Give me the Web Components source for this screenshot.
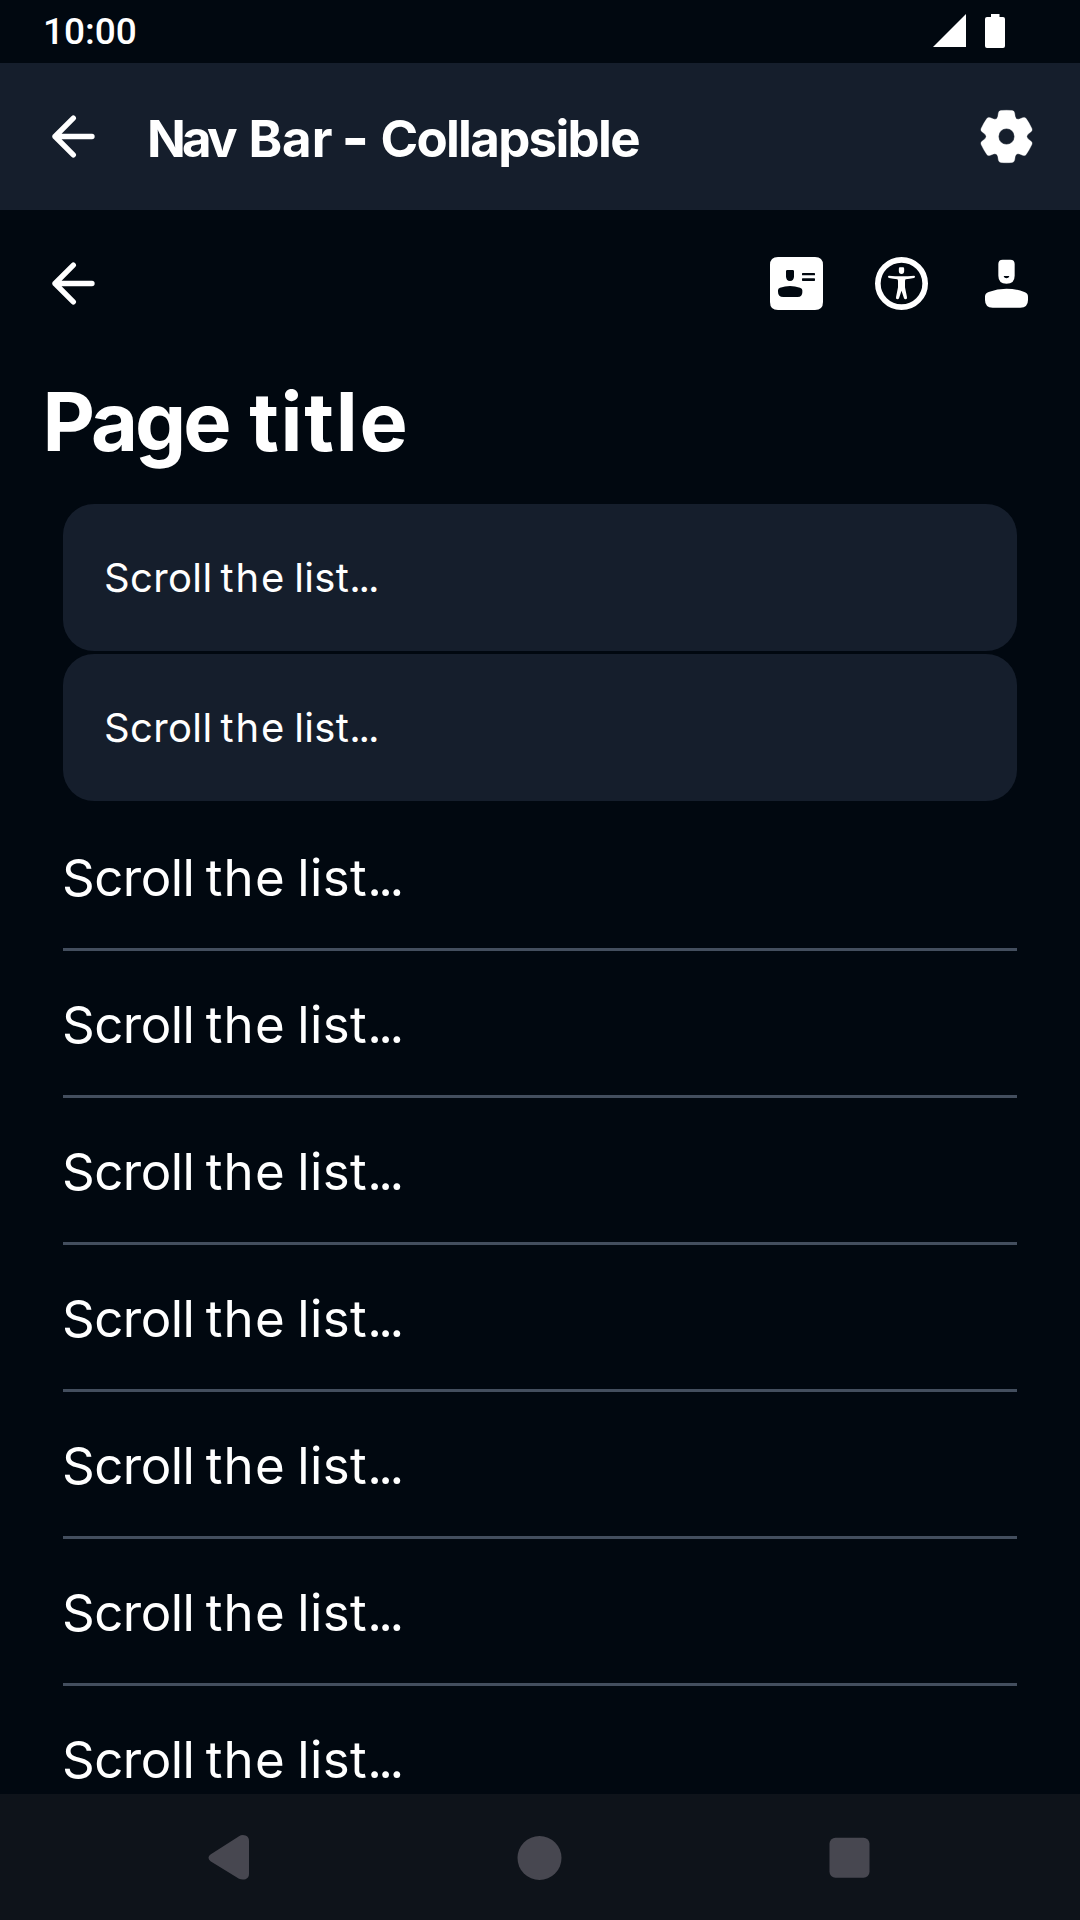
<!DOCTYPE html>
<html lang="en">
<head>
<meta charset="utf-8">
<title>Nav Bar - Collapsible</title>
<style>
  html, body { margin: 0; padding: 0; background: #010810; }
  body { width: 1080px; height: 1920px; overflow: hidden; }
</style>
</head>
<body>
<phone-screen>
  <status-bar slot="status">10:00</status-bar>
  <app-header slot="header"></app-header>
  <collapsible-toolbar slot="toolbar"></collapsible-toolbar>
  <list-card></list-card>
  <list-card></list-card>
  <list-row></list-row>
  <list-row></list-row>
  <list-row></list-row>
  <list-row></list-row>
  <list-row></list-row>
  <list-row></list-row>
  <list-row></list-row>
  <system-nav slot="nav"></system-nav>
</phone-screen>
<script>
const define = (name, html) => {
  const tpl = document.createElement('template');
  tpl.innerHTML = html;
  customElements.define(name, class extends HTMLElement {
    constructor() {
      super();
      this.attachShadow({ mode: 'open' }).append(tpl.content.cloneNode(true));
    }
  });
};

/* One gear tooth is repeated every 60 degrees around the centre. */
const gearPath = () => {
  const tooth = [[-24.5, -70], [-24, -77], [-17, -78], [0, -79.5], [17, -78], [24, -77], [24.5, -70], [26, -60], [28.5, -49.4]];
  let d = '';
  for (let i = 0; i < 6; i++) {
    const a = i * Math.PI / 3, c = Math.cos(a), s = Math.sin(a);
    const p = tooth.map(([x, y]) => (x * c - y * s + 79.5).toFixed(2) + ' ' + (x * s + y * c + 79.5).toFixed(2));
    const n = a + Math.PI / 3;
    const end = (-26 * Math.cos(n) + 60 * Math.sin(n) + 79.5).toFixed(2) + ' ' + (-26 * Math.sin(n) - 60 * Math.cos(n) + 79.5).toFixed(2);
    d += (i ? 'L' : 'M') + p[0] + 'Q' + p[1] + ' ' + p[2] + 'Q' + p[3] + ' ' + p[4] + 'Q' + p[5] + ' ' + p[6] + 'L' + p[7] + 'Q' + p[8] + ' ' + end;
  }
  return d + 'ZM55.5 79.5a24 24 0 1 0 48 0a24 24 0 1 0 -48 0Z';
};

const icons = {
  back: '<g fill="none" stroke="#fff" stroke-width="16" stroke-linecap="round" stroke-linejoin="round"><path d="M88 24.500L33 79.500L88 134.500M33 79.500H144"/></g>',
  gear: `<path fill="#fff" fill-rule="evenodd" stroke="#fff" stroke-width="1" d="${gearPath()}"/>`,
  card: '<path fill="#fff" fill-rule="evenodd" d="M24 0H135Q159 0 159 24V135Q159 159 135 159H24Q0 159 0 135V24Q0 0 24 0ZM52 39Q48 39 48 43V58Q48 72 60 72Q72 72 72 58V43Q72 39 68 39ZM24 100Q24 94 30 92Q60 82 90 92Q97 94 97 100V106Q97 120 83 120H40Q24 120 24 104ZM98 48H133Q135 48 135 50V53Q135 55 133 55H98Q96 55 96 53V50Q96 48 98 48ZM98 64H133Q135 64 135 66V70Q135 72 133 72H98Q96 72 96 70V66Q96 64 98 64Z"/>',
  access: '<circle cx="79.500" cy="79.500" r="71" fill="none" stroke="#fff" stroke-width="17"/><path fill="#fff" d="M75 31H84Q87.500 31 87.500 35V42Q87.500 51 79.500 51Q71.500 51 71.500 42V35Q71.500 31 75 31ZM42 56Q60 58 79.500 58Q99 58 117 56Q120 56 120 59.500Q120 62 117 63Q104 66 92 67Q90 68 90 73V91L96 121Q97 127 92 127Q88 127 87 124L79.500 101L72 124Q71 127 67 127Q62 127 63 121L69 91V73Q69 68 67 67Q55 66 42 63Q39 62 39 59.500Q39 56 42 56Z"/>',
  person: '<path fill="#fff" fill-rule="evenodd" d="M68 8H91Q104 8 104 21V56Q104 80 79.500 80Q55 80 55 56V21Q55 8 68 8ZM72 57Q71 57 71 58Q73 64 79.500 64Q86 64 88 58Q88 57 87 57ZM15 119Q15 109 26 105Q52 95 79.500 95Q107 95 133 105Q144 109 144 119V129Q144 152 121 152H38Q15 152 15 129Z"/>'
};

class UiIcon extends HTMLElement {
  constructor() { super(); this.attachShadow({ mode: 'open' }); }
  connectedCallback() {
    this.shadowRoot.innerHTML = `<style>:host{display:block;width:53px;height:53px;flex:none}svg{display:block;width:100%;height:100%;overflow:visible}</style>
      <svg viewBox="0 0 159 159" aria-hidden="true">${icons[this.getAttribute('name')]}</svg>`;
  }
}
customElements.define('ui-icon', UiIcon);

define('phone-screen', `<style>
  :host{display:flex;flex-direction:column;width:1080px;height:1920px;overflow:hidden;background:#010810;color:#fff;font-family:Inter,"Liberation Sans",sans-serif;white-space:nowrap}
  main{flex:1;min-height:0;overflow:hidden;display:flex;flex-direction:column;gap:3px;padding:0 63px}
  main ::slotted(list-row){margin-bottom:-3px}
</style>
<slot name="status"></slot><slot name="header"></slot><slot name="toolbar"></slot>
<main><slot></slot></main><slot name="nav"></slot>`);

define('status-bar', `<style>
  :host{display:flex;justify-content:space-between;height:63px;flex:none;padding:0 75px 0 43px;font:500 37px/63px Roboto,sans-serif}
  div{display:flex;gap:19px;padding-top:14px;height:34px}
  svg{display:block;height:34px}
</style>
<span><slot></slot></span>
<div>
  <svg width="33" viewBox="0 0 33 34"><path fill="#fff" d="M0 33L33 0V33Z"/></svg>
  <svg width="20" viewBox="0 0 20 34"><path fill="#fff" d="M6 0H14.500V3H18Q20 3 20 5V32Q20 34 18 34H2Q0 34 0 32V5Q0 3 2 3H6Z"/></svg>
</div>`);

define('app-header', `<style>
  :host{display:flex;align-items:center;height:147px;flex:none;box-sizing:border-box;padding:0 47px 0 44px;background:#151e2c}
  h1{flex:1;margin:0;padding:4px 0 0 50px;font-weight:700;font-size:51px;line-height:143px}
  .nav{letter-spacing:-3.800px}
  .bar{margin-left:2.500px}
  .dash{font-size:59px;line-height:1;margin-left:-3.200px;vertical-align:-2px}
  .name{letter-spacing:-1.700px;margin-left:-.7px}
</style>
<ui-icon name="back"></ui-icon>
<h1><span class="nav">Nav</span> <span class="bar">Bar</span> <span class="dash">-</span> <span class="name">Collapsible</span></h1>
<ui-icon name="gear"></ui-icon>`);

define('collapsible-toolbar', `<style>
  :host{display:block;height:294px;flex:none}
  nav{display:flex;align-items:center;gap:52px;height:147px;padding:0 47px 0 44px}
  nav ui-icon:first-child{margin-right:auto}
  h2{margin:0;height:147px;padding-left:42.500px;font-weight:700;font-size:81px;line-height:131px}
  .a{letter-spacing:-3px}
  .b{letter-spacing:1.700px;margin-left:1.600px}
</style>
<nav><ui-icon name="back"></ui-icon><ui-icon name="card"></ui-icon><ui-icon name="access"></ui-icon><ui-icon name="person"></ui-icon></nav>
<h2><span class="a">Page</span> <span class="b">title</span></h2>`);

const words = '<span class="w1">Scroll</span> <span class="w2">the</span> <span class="w3">list</span><span class="w4">...</span>';

define('list-card', `<style>
  :host{display:block;flex:none;height:147px;box-sizing:border-box;padding-left:41px;border-radius:31px;background:#151e2c;font-size:40px;line-height:147px;word-spacing:-.078em}
  .w1{letter-spacing:.009em}.w2{letter-spacing:.045em}.w3{letter-spacing:.009em}.w4{letter-spacing:-.054em}
</style>${words}`);

define('list-row', `<style>
  :host{display:block;flex:none;height:147px;box-sizing:border-box;border-bottom:3px solid #434e5e;font-size:51px;line-height:147px;word-spacing:-.062em;text-indent:-1px}
  .w1{letter-spacing:-.01em}.w2{letter-spacing:.025em}.w3{letter-spacing:.008em}.w4{letter-spacing:-.07em}
</style>${words}`);

define('system-nav', `<style>
  :host{display:flex;align-items:center;justify-content:space-between;height:126px;flex:none;box-sizing:border-box;padding:0 210px 0 208px;background:#0e131a}
  svg{display:block}
</style>
<svg width="41" height="46" viewBox="0 0 41 46"><path fill="#474750" d="M2.500 20.500L31 2.300Q34 .2 37.500 1.500Q41 2.800 41 7V40Q41 43.700 37.500 45.200Q34 46 31 44.700L2.500 27.200Q.5 25.800.5 23.800Q.5 21.700 2.500 20.500Z"/></svg>
<svg width="45" height="45" viewBox="0 0 45 45"><circle cx="22.500" cy="23" r="22" fill="#474750"/></svg>
<svg width="41" height="41" viewBox="0 0 41 41"><rect x=".5" y=".7" width="40" height="40" rx="6" fill="#474750"/></svg>`);
</script>
</body>
</html>
